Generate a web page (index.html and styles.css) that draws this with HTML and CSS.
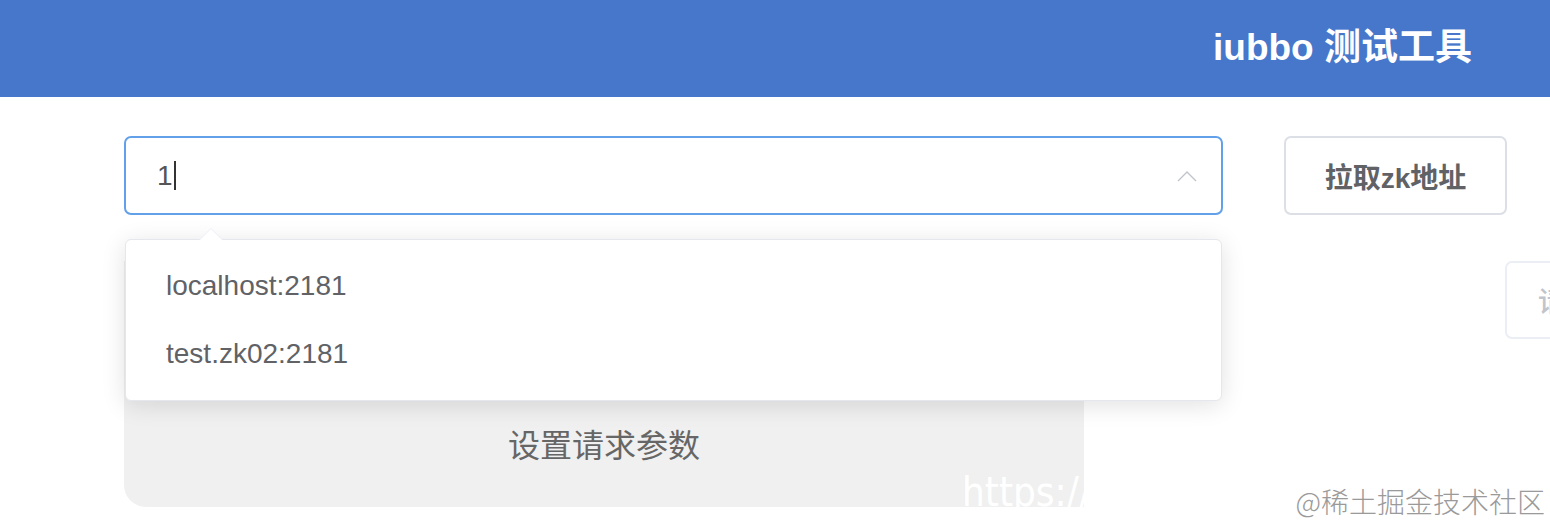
FILE: index.html
```html
<!DOCTYPE html>
<html lang="zh-CN">
<head>
    <meta charset="UTF-8">
    <meta name="viewport" content="width=device-width, initial-scale=1.0">
    <title>iubbo 测试工具</title>
    <link rel="stylesheet" href="styles.css">
</head>
<body>
    <div class="header">
        <h1 class="title">iubbo 测试工具</h1>
    </div>

    <div class="main">
        <div class="row">
            <div class="select">
                <div class="select-input">
                    <span class="value">1</span><span class="caret"></span>
                </div>
                <svg class="chevron" width="20" height="12" viewBox="0 0 20 12">
                    <path d="M1 11 L10 2 L19 11" fill="none" stroke="#c0c4cc" stroke-width="1.4"/>
                </svg>

                <div class="dropdown">
                    <div class="dropdown-arrow"></div>
                    <div class="option">localhost:2181</div>
                    <div class="option">test.zk02:2181</div>
                </div>
            </div>
            <button class="btn">拉取zk地址</button>
        </div>

        <div class="row row-second">
            <div class="params">
                <span class="params-label">设置请求参数</span>
                <span class="mark-url">https://</span>
            </div>
            <button class="btn btn-disabled">请求</button>
        </div>
    </div>

    <div class="mark-site">@稀土掘金技术社区</div>
</body>
</html>
```

FILE: styles.css
```css
html, body {
    overflow: hidden;
}
body {
    margin: 0;
    font-family: "Liberation Sans", "Noto Sans CJK SC", sans-serif;
    color: #606266;
    background: #fff;
    height: 524px;
    position: relative;
}
.header {
    height: 97px;
    background-color: #4677cb;
    display: flex;
    justify-content: flex-end;
    align-items: center;
    padding-right: 78px;
}
.title {
    margin: 0 0 10px;
    color: #fff;
    font-family: "Liberation Sans", "Noto Sans CJK SC", sans-serif;
    font-size: 37px;
    font-weight: 700;
}
.main {
    padding: 39px 0 0 124px;
}
.row {
    display: flex;
    gap: 61px;
}
.row-second {
    margin-top: 46px;
    gap: 421px;
}
.select {
    position: relative;
    flex-shrink: 0;
    width: 1099px;
    height: 79px;
    box-sizing: border-box;
    border: 2px solid #62a0ea;
    border-radius: 7px;
    display: flex;
    align-items: center;
    padding: 0 24px 0 31px;
}
.select-input {
    flex: 1;
    display: flex;
    align-items: center;
    font-size: 28px;
    color: #555;
}
.caret {
    display: inline-block;
    width: 2px;
    height: 29px;
    margin-left: 1px;
    background: #333;
}
.chevron {
    display: block;
}
.dropdown {
    position: absolute;
    top: 101px;
    left: -1px;
    right: -1px;
    background: #fff;
    border: 1px solid #e4e7ed;
    border-radius: 6px;
    box-shadow: 0 4px 24px rgba(0, 0, 0, 0.12);
    padding: 12px 0;
    z-index: 5;
}
.dropdown-arrow {
    position: absolute;
    top: -12px;
    left: 73px;
    width: 0;
    height: 0;
    border-left: 12px solid transparent;
    border-right: 12px solid transparent;
    border-bottom: 12px solid #ebeef5;
}
.dropdown-arrow::after {
    content: "";
    position: absolute;
    top: 1px;
    left: -11px;
    border-left: 11px solid transparent;
    border-right: 11px solid transparent;
    border-bottom: 11px solid #fff;
}
.option {
    height: 68px;
    line-height: 68px;
    padding: 0 40px;
    font-size: 28px;
    color: #606266;
}
.btn {
    flex-shrink: 0;
    width: 223px;
    height: 79px;
    border: 2px solid #dcdfe6;
    border-radius: 7px;
    background: #fff;
    font-family: "Liberation Sans", "Noto Sans CJK SC", sans-serif;
    font-size: 28px;
    font-weight: 700;
    color: #606266;
    padding: 0;
}
.btn-disabled {
    width: 200px;
    height: 78px;
    border-color: #ebeef5;
    color: #c0c4cc;
    text-align: left;
    padding-left: 31px;
    font-weight: 500;
}
.params {
    position: relative;
    flex-shrink: 0;
    width: 960px;
    height: 246px;
    background: #f0f0f0;
    border-radius: 0 0 0 22px;
    overflow: hidden;
    display: flex;
    justify-content: center;
    align-items: flex-end;
    padding-bottom: 41px;
    box-sizing: border-box;
}
.params-label {
    font-family: "Noto Sans CJK SC", sans-serif;
    font-size: 32px;
    color: #666;
}
.mark-url {
    position: absolute;
    left: 838px;
    bottom: -8px;
    font-family: "DejaVu Sans Condensed", "DejaVu Sans", sans-serif;
    font-stretch: condensed;
    font-weight: 300;
    font-size: 40px;
    color: #fff;
}
.mark-site {
    position: absolute;
    right: 5px;
    bottom: 3px;
    font-family: "Noto Sans CJK SC", serif;
    font-weight: 300;
    font-size: 28px;
    color: #9a9a9a;
}
```
